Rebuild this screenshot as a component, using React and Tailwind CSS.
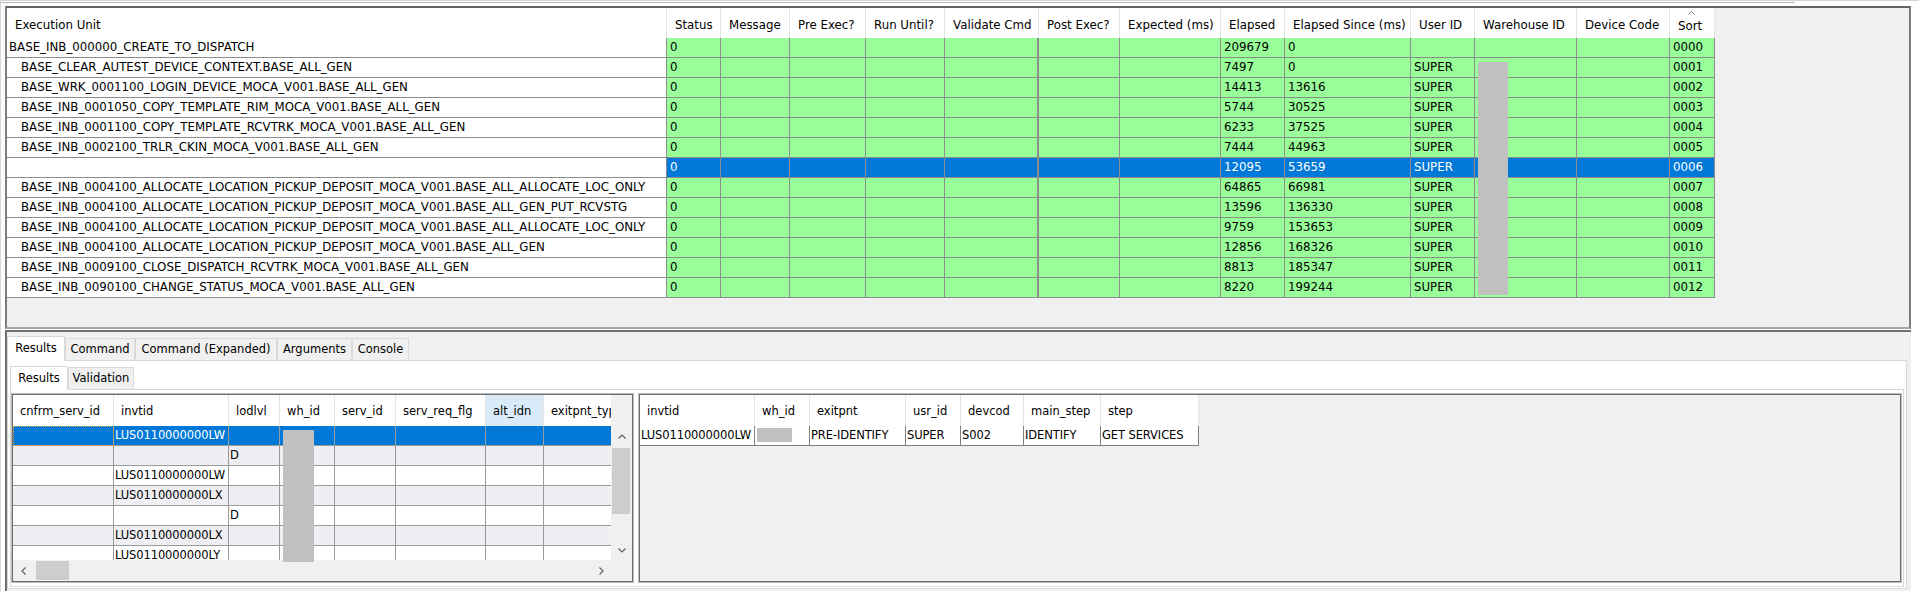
import React from 'react'

const TOP_GRID = 'grid grid-cols-[660px_54px_69px_76px_79px_94px_81px_101px_64px_126px_64px_102px_93px_45px]'
const LEFT_GRID = 'grid grid-cols-[101px_115px_51px_55px_61px_90px_58px_85px]'
const RIGHT_GRID = 'grid grid-cols-[115px_55px_96px_55px_63px_77px_98px]'

const TOP_HEADERS = ['Execution Unit', 'Status', 'Message', 'Pre Exec?', 'Run Until?', 'Validate Cmd', 'Post Exec?', 'Expected (ms)', 'Elapsed', 'Elapsed Since (ms)', 'User ID', 'Warehouse ID', 'Device Code', 'Sort']

const UNITS = [
  { name: 'BASE_INB_000000_CREATE_TO_DISPATCH', root: true, elapsed: '209679', since: '0', user: '', sort: '0000' },
  { name: 'BASE_CLEAR_AUTEST_DEVICE_CONTEXT.BASE_ALL_GEN', elapsed: '7497', since: '0', user: 'SUPER', sort: '0001' },
  { name: 'BASE_WRK_0001100_LOGIN_DEVICE_MOCA_V001.BASE_ALL_GEN', elapsed: '14413', since: '13616', user: 'SUPER', sort: '0002' },
  { name: 'BASE_INB_0001050_COPY_TEMPLATE_RIM_MOCA_V001.BASE_ALL_GEN', elapsed: '5744', since: '30525', user: 'SUPER', sort: '0003' },
  { name: 'BASE_INB_0001100_COPY_TEMPLATE_RCVTRK_MOCA_V001.BASE_ALL_GEN', elapsed: '6233', since: '37525', user: 'SUPER', sort: '0004' },
  { name: 'BASE_INB_0002100_TRLR_CKIN_MOCA_V001.BASE_ALL_GEN', elapsed: '7444', since: '44963', user: 'SUPER', sort: '0005' },
  { name: '', selected: true, elapsed: '12095', since: '53659', user: 'SUPER', sort: '0006' },
  { name: 'BASE_INB_0004100_ALLOCATE_LOCATION_PICKUP_DEPOSIT_MOCA_V001.BASE_ALL_ALLOCATE_LOC_ONLY', elapsed: '64865', since: '66981', user: 'SUPER', sort: '0007' },
  { name: 'BASE_INB_0004100_ALLOCATE_LOCATION_PICKUP_DEPOSIT_MOCA_V001.BASE_ALL_GEN_PUT_RCVSTG', elapsed: '13596', since: '136330', user: 'SUPER', sort: '0008' },
  { name: 'BASE_INB_0004100_ALLOCATE_LOCATION_PICKUP_DEPOSIT_MOCA_V001.BASE_ALL_ALLOCATE_LOC_ONLY', elapsed: '9759', since: '153653', user: 'SUPER', sort: '0009' },
  { name: 'BASE_INB_0004100_ALLOCATE_LOCATION_PICKUP_DEPOSIT_MOCA_V001.BASE_ALL_GEN', elapsed: '12856', since: '168326', user: 'SUPER', sort: '0010' },
  { name: 'BASE_INB_0009100_CLOSE_DISPATCH_RCVTRK_MOCA_V001.BASE_ALL_GEN', elapsed: '8813', since: '185347', user: 'SUPER', sort: '0011' },
  { name: 'BASE_INB_0090100_CHANGE_STATUS_MOCA_V001.BASE_ALL_GEN', elapsed: '8220', since: '199244', user: 'SUPER', sort: '0012' },
]

const LEFT_HEADERS = ['cnfrm_serv_id', 'invtid', 'lodlvl', 'wh_id', 'serv_id', 'serv_req_flg', 'alt_idn', 'exitpnt_typ']
const LEFT_ROWS = [
  ['', 'LUS0110000000LW', ''],
  ['', '', 'D'],
  ['', 'LUS0110000000LW', ''],
  ['', 'LUS0110000000LX', ''],
  ['', '', 'D'],
  ['', 'LUS0110000000LX', ''],
  ['', 'LUS0110000000LY', ''],
]

const RIGHT_HEADERS = ['invtid', 'wh_id', 'exitpnt', 'usr_id', 'devcod', 'main_step', 'step']
const RIGHT_ROW = ['LUS0110000000LW', null, 'PRE-IDENTIFY', 'SUPER', 'S002', 'IDENTIFY', 'GET SERVICES']

function Chevron({ dir }) {
  const paths = {
    up: 'M0.5 4.5 L4 1 L7.5 4.5',
    down: 'M0.5 0.5 L4 4 L7.5 0.5',
    left: 'M4.5 0.5 L1 4 L4.5 7.5',
    right: 'M0.5 0.5 L4 4 L0.5 7.5',
  }
  const vertical = dir === 'up' || dir === 'down'
  return (
    <svg width={vertical ? 8 : 5} height={vertical ? 5 : 8} viewBox={vertical ? '0 0 8 5' : '0 0 5 8'} fill="none">
      <path d={paths[dir]} stroke="#606060" strokeWidth="1.2" />
    </svg>
  )
}

function UnitRow({ u }) {
  const cell = u.selected ? 'bg-[#0078d7] text-white' : 'bg-[#99ff99]'
  const values = ['0', '', '', '', '', '', '', u.elapsed, u.since, u.user, '', '', u.sort]
  return (
    <div className={TOP_GRID}>
      <div className={`h-[20px] border-r border-b border-[#8c8c8c] bg-white leading-[19px] whitespace-nowrap overflow-hidden ${u.root ? 'pl-[2px]' : 'pl-[14px]'}`}>
        {u.name}
      </div>
      {values.map((v, i) => (
        <div key={i} className={`h-[20px] border-b border-[#8c8c8c] leading-[19px] pl-[3px] whitespace-nowrap overflow-hidden ${i === 4 ? 'border-r-2' : 'border-r'} ${cell}`}>
          {v}
        </div>
      ))}
    </div>
  )
}

function TopTable() {
  return (
    <div className="relative text-[11.8px]">
      <div className={TOP_GRID}>
        {TOP_HEADERS.map((h) =>
          h === 'Sort' ? (
            <div key={h} className="h-[30px] bg-white border-r border-[#e5e5e5] pl-[8px] pt-[3px] flex flex-col items-start">
              <svg width="7" height="4" viewBox="0 0 7 4" fill="none" className="ml-[10px]">
                <path d="M0.5 3.5 L3.5 0.5 L6.5 3.5" stroke="#808080" strokeWidth="1" />
              </svg>
              <span className="mt-[4px] leading-[14px]">{h}</span>
            </div>
          ) : (
            <div key={h} className="h-[30px] bg-white border-r border-[#e5e5e5] pl-[8px] pt-[5px] flex items-center whitespace-nowrap overflow-hidden">
              {h}
            </div>
          )
        )}
      </div>
      {UNITS.map((u, i) => (
        <UnitRow key={i} u={u} />
      ))}
      <div className="absolute left-[1471px] top-[54px] w-[30px] h-[233px] bg-[#c0c0c0]" />
    </div>
  )
}

function Tab({ label, selected, width }) {
  if (selected) {
    return (
      <div className={`${width} h-full bg-white border border-b-0 border-[#d9d9d9] flex items-center justify-center whitespace-nowrap`}>
        {label}
      </div>
    )
  }
  return (
    <div className={`${width} h-[22px] mb-px bg-[#f0f0f0] border border-b-0 border-[#d9d9d9] flex items-center justify-center whitespace-nowrap`}>
      {label}
    </div>
  )
}

function LeftGrid() {
  return (
    <div className="w-[623px] h-[190px] border border-[#bcbcbc] shrink-0">
      <div className="relative h-full border border-[#6e6e6e] bg-[#f0f0f0] flex flex-col">
        <div className="flex h-[165px]">
          <div className="w-[598px] overflow-hidden">
            <div className={`${LEFT_GRID} w-[616px]`}>
              {LEFT_HEADERS.map((h) => (
                <div key={h} className={`h-[31px] border-r border-[#e5e5e5] pl-[7px] pt-[2px] flex items-center whitespace-nowrap overflow-hidden ${h === 'alt_idn' ? 'bg-[#d9ebf9]' : 'bg-white'}`}>
                  {h}
                </div>
              ))}
            </div>
            {LEFT_ROWS.map((r, ri) => {
              const sel = ri === 0
              const bg = sel ? 'bg-[#0078d7] text-white' : ri % 2 === 1 ? 'bg-[#efeff3]' : 'bg-white'
              return (
                <div key={ri} className={`${LEFT_GRID} w-[616px]`}>
                  {LEFT_HEADERS.map((h, ci) => (
                    <div
                      key={h}
                      className={`h-[20px] border-r border-b border-[#9a9a9a] leading-[19px] pl-[1px] tracking-[-0.1px] whitespace-nowrap overflow-hidden ${bg} ${sel && ci === 0 ? 'outline-1 outline-dotted outline-[#e8973a] -outline-offset-1' : ''}`}
                    >
                      {r[ci] || ''}
                    </div>
                  ))}
                </div>
              )
            })}
          </div>
          <div className="w-[21px] flex flex-col">
            <div className="h-[31px]" />
            <div className="flex-1 flex flex-col">
              <div className="h-[20px] flex items-center justify-center">
                <Chevron dir="up" />
              </div>
              <div className="ml-[1px] mt-[2px] w-[18px] h-[66px] bg-[#cdcdcd]" />
              <div className="flex-1" />
              <div className="h-[20px] flex items-center justify-center">
                <Chevron dir="down" />
              </div>
            </div>
          </div>
        </div>
        <div className="h-[21px] flex">
          <div className="w-[598px] flex">
            <div className="w-[20px] flex items-center justify-center">
              <Chevron dir="left" />
            </div>
            <div className="ml-[3px] mt-px w-[33px] h-[19px] bg-[#cdcdcd]" />
            <div className="flex-1" />
            <div className="w-[20px] flex items-center justify-center">
              <Chevron dir="right" />
            </div>
          </div>
          <div className="w-[21px]" />
        </div>
        <div className="absolute left-[270px] top-[35px] w-[31px] h-[132px] bg-[#c0c0c0]" />
      </div>
    </div>
  )
}

function RightGrid() {
  return (
    <div className="w-[1264px] h-[190px] border border-[#bcbcbc] shrink-0">
      <div className="h-full border border-[#6e6e6e] bg-[#f0f0f0]">
        <div className={`${RIGHT_GRID} w-fit`}>
          {RIGHT_HEADERS.map((h) => (
            <div key={h} className="h-[31px] bg-white border-r border-[#e5e5e5] pl-[7px] pt-[2px] flex items-center whitespace-nowrap">
              {h}
            </div>
          ))}
        </div>
        <div className={`${RIGHT_GRID} w-fit`}>
          {RIGHT_ROW.map((v, i) => (
            <div key={i} className="h-[20px] bg-white border-r border-b border-[#808080] leading-[19px] pl-[1px] tracking-[-0.1px] whitespace-nowrap overflow-hidden">
              {v === null ? <div className="ml-px mt-[2px] w-[35px] h-[14px] bg-[#c0c0c0]" /> : v}
            </div>
          ))}
        </div>
      </div>
    </div>
  )
}

export default function App() {
  return (
    <div className="w-[1919px] h-[591px] overflow-hidden bg-white border-l border-[#d6d6d6] font-['DejaVu_Sans',sans-serif] text-[11.5px] text-black flex flex-col">
      <div className="h-px w-full bg-[#d6d6d6] shrink-0" />
      <div className="h-px shrink-0" />
      <div className="h-px w-[1794px] bg-[#b8b8b8] shrink-0" />
      <div className="h-[3px] shrink-0" />

      {/* execution units */}
      <div className="ml-[4px] w-[1906px] h-[323px] shrink-0 border-2 border-[#7c7c7c] border-t-[#646464] border-b-[#a5a5a5] bg-[#f0f0f0] overflow-hidden">
        <TopTable />
      </div>

      <div className="h-px shrink-0" />

      {/* result tabs */}
      <div className="ml-[4px] w-[1906px] flex-1 border-t-2 border-l-2 border-[#707070] bg-[#f0f0f0] pt-[4px]">
        <div className="flex items-end h-[25px] relative z-10">
          <Tab label="Results" selected width="w-[58px]" />
          <Tab label="Command" width="w-[70px]" />
          <Tab label="Command (Expanded)" width="w-[142px]" />
          <Tab label="Arguments" width="w-[75px]" />
          <Tab label="Console" width="w-[57px]" />
        </div>
        <div className="w-[1900px] h-[229px] -mt-px border border-[#d9d9d9] bg-white pl-[2px] pt-[5px]">
          <div className="flex items-end h-[24px] relative z-10">
            <Tab label="Results" selected width="w-[58px]" />
            <Tab label="Validation" width="w-[66px]" />
          </div>
          <div className="w-[1894px] h-[198px] -mt-px border border-[#d9d9d9] bg-white pt-[3px] flex gap-[4px]">
            <LeftGrid />
            <RightGrid />
          </div>
        </div>
      </div>
    </div>
  )
}
